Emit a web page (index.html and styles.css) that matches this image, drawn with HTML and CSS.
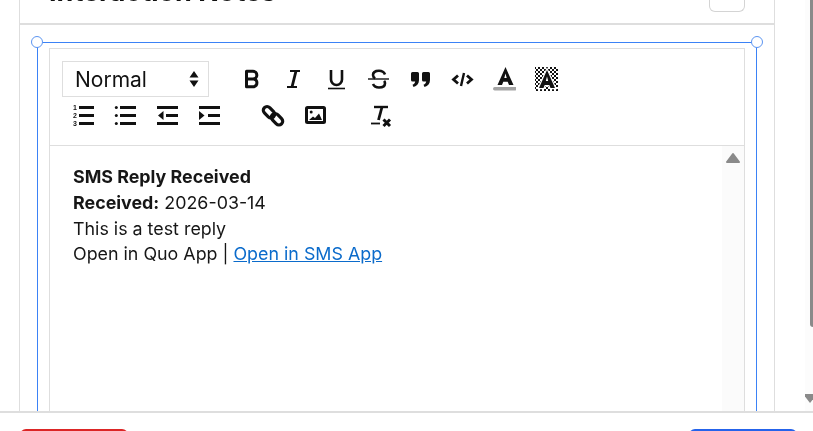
FILE: index.html
```html
<!DOCTYPE html>
<html lang="en">
<head>
    <meta charset="UTF-8">
    <meta name="viewport" content="width=device-width, initial-scale=1.0">
    <title>Interaction Notes</title>
    <link rel="stylesheet" href="styles.css">
</head>
<body>
    <div class="page">
        <div class="main">
            <div class="modal">
                <div class="modal-header">
                    <h2 class="modal-title">Interaction Notes</h2>
                    <button class="close-btn"></button>
                </div>
                <div class="modal-body">
                    <div class="selection">
                        <span class="handle handle-left"></span>
                        <span class="handle handle-right"></span>
                        <div class="editor">
                            <div class="toolbar">
                                <div class="tool-row">
                                    <div class="format-select">
                                        <span>Normal</span>
                                        <svg class="select-arrows" width="10" height="16" viewBox="0 0 10 16"><path d="M5 0 9.5 6.5H.5zM5 16 .5 9.5h9z" fill="#111"/></svg>
                                    </div>
                                    <div class="tool-group group-text">
                                        <!-- negrita, cursiva, subrayado, tachado -->
                                        <svg class="icon" viewBox="0 0 24 24"><path class="st" d="M6.500 4.300h6.500a3.800 3.800 0 0 1 0 7.700H6.500zM6.500 12h7.500a4 4 0 0 1 0 7.700H6.500z" stroke-width="3" stroke-linejoin="round"/></svg>
                                        <svg class="icon" viewBox="0 0 24 24"><path class="st" d="M8 4h10" stroke-width="2"/><path class="st" d="M5 20h10" stroke-width="2"/><path class="st" d="M14 4 10 20" stroke-width="2.800"/></svg>
                                        <svg class="icon" viewBox="0 0 24 24"><path class="st" d="M7 3v9.500a5.500 5.500 0 0 0 11 0V3" stroke-width="2.600"/><path class="st" d="M4 21.500h17" stroke-width="1.600"/></svg>
                                        <svg class="icon" viewBox="0 0 24 24"><path class="st" d="M19 7.500C18 5 16 3.800 13 3.800c-3.500 0-6 1.600-6 4.200 0 1.500.8 2.600 2.200 3.300M7 17c1 2.300 3 3.500 6 3.500 3.500 0 6-1.600 6-4.200 0-1-.3-1.800-.9-2.500" stroke-width="2.600"/><path class="st" d="M2 12h21" stroke-width="1.400"/></svg>
                                        <svg class="icon" viewBox="0 0 24 24"><path d="M4.500 5h5a1.500 1.500 0 0 1 1.500 1.500v6.500c0 3.500-2 6-5.500 7l-1-2.300c1.500-.6 2.500-1.700 2.700-3.200H4.500A1.500 1.500 0 0 1 3 13V6.500A1.500 1.500 0 0 1 4.500 5zM15.500 5h5a1.500 1.500 0 0 1 1.500 1.500v6.500c0 3.500-2 6-5.500 7l-1-2.300c1.500-.6 2.500-1.700 2.700-3.200h-2.700A1.500 1.500 0 0 1 14 13V6.500A1.500 1.500 0 0 1 15.500 5z"/></svg>
                                        <svg class="icon" viewBox="0 0 24 24"><path class="st" d="M8 8.500 3.500 12.500 8 16.500M17 8.500l4.500 4-4.500 4" stroke-width="2.800"/><path class="st" d="M14 6l-3 13" stroke-width="2.400"/></svg>
                                        <svg class="icon" viewBox="0 0 24 24"><path d="M13.500 0 21.500 18H17L15.700 14.700H11.300L10 18H5.500zM13.500 6.500 12.300 11h2.400z"/><rect x="1" y="20" width="24" height="3.400" rx="1.700" fill="#a3a3a3"/></svg>
                                        <svg class="icon" viewBox="0 0 24 24"><defs><pattern id="checks" width="4" height="4" patternUnits="userSpaceOnUse"><rect width="2" height="2"/><rect x="2" y="2" width="2" height="2"/></pattern></defs><rect x="1" y="0" width="24" height="24" fill="url(#checks)"/><path d="M13 3 21 21H16.500L15.300 18H10.700L9.500 21H5zM13 9.500 11.800 14h2.400z" stroke="#fff" stroke-width="2.400" paint-order="stroke"/></svg>
                                    </div>
                                </div>
                                <div class="tool-row tool-row-second">
                                    <div class="tool-group group-lists">
                                        <!-- listas y sangria -->
                                        <svg class="icon" viewBox="0 0 24 24"><path class="st" d="M8 3.500h15M8 11.500h15M8 19.500h15" stroke-width="2.800"/><text x="2" y="6" class="num">1</text><text x="2" y="13.500" class="num">2</text><text x="2" y="21.500" class="num">3</text></svg>
                                        <svg class="icon" viewBox="0 0 24 24"><path class="st" d="M7 3.500h16M7 11.500h16M7 19.500h16" stroke-width="2.800"/><circle cx="3.300" cy="3.500" r="1.500"/><circle cx="3.300" cy="11.500" r="1.500"/><circle cx="3.300" cy="19.500" r="1.500"/></svg>
                                        <svg class="icon" viewBox="0 0 24 24"><path class="st" d="M2 3.500h21M11 11.500h12M2 19.500h21" stroke-width="2.800"/><path d="M8.500 7v9L3 11.500z"/></svg>
                                        <svg class="icon" viewBox="0 0 24 24"><path class="st" d="M2 3.500h21M11 11.500h12M2 19.500h21" stroke-width="2.800"/><path d="M2 7v9l5.500-4.500z"/></svg>
                                    </div>
                                    <div class="tool-group group-media">
                                        <!-- enlace, imagen -->
                                        <svg class="icon" viewBox="0 0 24 24"><rect x="1.500" y="4.500" width="13" height="7.500" rx="3.750" transform="rotate(45 8 8.250)" class="st" stroke-width="3.200"/><rect x="9.500" y="11.500" width="13" height="7.500" rx="3.750" transform="rotate(45 16 15.250)" class="st" stroke-width="3.200"/></svg>
                                        <svg class="icon" viewBox="0 0 24 24"><rect x="3.500" y="3.500" width="18" height="15" rx="1" class="st" stroke-width="3"/><circle cx="8.200" cy="8" r="1.500"/><path d="M6 16l4-3.500 2 1.500 4-4.500 3 6.500z"/></svg>
                                    </div>
                                    <div class="tool-group group-clear">
                                        <svg class="icon" viewBox="0 0 24 24"><path class="st" d="M6 3h14" stroke-width="2.400"/><path class="st" d="M14 3 10.500 16" stroke-width="2.800"/><path class="st" d="M3 19.500h9" stroke-width="1.800"/><path class="st" d="M15.500 15.500l6.500 6.500M22 15.500 15.500 22" stroke-width="3"/></svg>
                                    </div>
                                </div>
                            </div>
                            <div class="content">
                                <div class="text">
                                    <p><strong>SMS Reply Received</strong></p>
                                    <p><strong>Received:</strong> 2026-03-14</p>
                                    <p>This is a test reply</p>
                                    <p>Open in Quo App | <a href="#">Open in SMS App</a></p>
                                </div>
                                <div class="inner-scroll">
                                    <svg width="16" height="12" viewBox="0 0 16 12"><path d="M8 2 14 10H2z" fill="#8a8a8a" stroke="#8a8a8a" stroke-width="2" stroke-linejoin="round"/></svg>
                                </div>
                            </div>
                        </div>
                    </div>
                </div>
            </div>
        </div>
        <div class="page-scroll">
            <div class="page-thumb"></div>
            <span class="page-arrow"></span>
        </div>
    </div>
    <div class="footer">
        <button class="btn btn-danger"></button>
        <button class="btn btn-primary"></button>
    </div>
</body>
</html>
```

FILE: styles.css
```css
* {
    box-sizing: border-box;
}

body {
    margin: 0;
    height: 431px;
    overflow: hidden;
    background-color: #fff;
    font-family: Inter, sans-serif;
    color: #161616;
    display: flex;
    flex-direction: column;
}

.page {
    height: 411px;
    display: flex;
    overflow: hidden;
    will-change: transform;
}

.main {
    flex: 1;
    padding-left: 19px;
    padding-right: 30px;
    overflow: hidden;
}

.modal {
    height: 100%;
    border-left: 1px solid #dedede;
    border-right: 1px solid #dedede;
}

.modal-header {
    height: 25px;
    padding: 0 29px;
    border-bottom: 2px solid #dedede;
    display: flex;
    align-items: flex-end;
    justify-content: space-between;
}

.modal-title {
    margin: 0 0 15px;
    font-size: 27px;
    line-height: 32px;
    font-weight: 700;
    white-space: nowrap;
    color: #111;
}

.close-btn {
    width: 36px;
    height: 12px;
    align-self: flex-start;
    background: #fff;
    border: 1px solid #d4d4d4;
    border-top: none;
    border-radius: 0 0 6px 6px;
}

.modal-body {
    padding: 17px 17px 0;
    height: 386px;
}

.selection {
    position: relative;
    height: 100%;
    padding: 5px 11px 0;
    border-left: 1px solid #3b82f6;
    border-right: 1px solid #3b82f6;
    border-top: 1px solid #3b82f6;
}

.handle {
    position: absolute;
    top: -7px;
    width: 12px;
    height: 12px;
    border: 1.5px solid #5b94f0;
    border-radius: 50%;
    background: #fff;
}

.handle-left {
    left: -7px;
}

.handle-right {
    right: -7px;
}

.editor {
    height: 100%;
    border-left: 1px solid #dedede;
    border-right: 1px solid #dedede;
    border-top: 1px solid #dedede;
}

.toolbar {
    height: 97px;
    padding: 12px 12px 0;
    border-bottom: 1px solid #dedede;
}

.tool-row {
    display: flex;
    align-items: center;
}

.tool-row-second {
    margin-top: 7px;
}

.format-select {
    width: 147px;
    height: 36px;
    padding: 0 9px 0 12px;
    border: 1px solid #dedede;
    display: flex;
    align-items: center;
    justify-content: space-between;
    font-size: 21px;
    color: #111;
}

.tool-group {
    display: flex;
    align-items: center;
    gap: 18px;
}

.icon {
    width: 24px;
    height: 24px;
    display: block;
    flex-shrink: 0;
    fill: #111;
}

.st {
    fill: none;
    stroke: #111;
}

.num {
    font-family: "Liberation Sans", sans-serif;
    font-size: 7px;
    font-weight: 700;
}

.group-text {
    margin-left: 31px;
}

.group-lists {
    margin-left: 9px;
}

.group-media {
    margin-left: 40px;
}

.group-clear {
    margin-left: 41px;
}

.content {
    height: 270px;
    display: flex;
}

.text {
    flex: 1;
    padding: 18.4px 23px;
    font-size: 17.85px;
    line-height: 25.6px;
}

.text p {
    margin: 0;
}

.text strong {
    font-weight: 700;
}

.text a {
    color: #0b6bcb;
}

.inner-scroll {
    width: 22px;
    background: #fbfbfb;
    padding-top: 6px;
    display: flex;
    justify-content: center;
    align-items: flex-start;
}

.page-scroll {
    width: 8px;
    background: #fcfcfc;
    display: flex;
    flex-direction: column;
    align-items: flex-end;
    overflow: hidden;
}

.page-thumb {
    width: 3px;
    height: 327px;
    background: #8a8a8a;
    border-bottom-left-radius: 3px;
}

.page-arrow {
    width: 0;
    height: 0;
    margin-top: 67px;
    margin-right: -4px;
    border-left: 7px solid transparent;
    border-right: 7px solid transparent;
    border-top: 9px solid #8a8a8a;
}

.footer {
    height: 20px;
    border-top: 2px solid #dedede;
    display: flex;
    justify-content: space-between;
    padding: 16px 16px 0 20px;
    overflow: hidden;
}

.btn {
    width: 108px;
    height: 30px;
    border: none;
    border-radius: 6px;
}

.btn-danger {
    background: #dc2626;
}

.btn-primary {
    background: #2563eb;
}
```
